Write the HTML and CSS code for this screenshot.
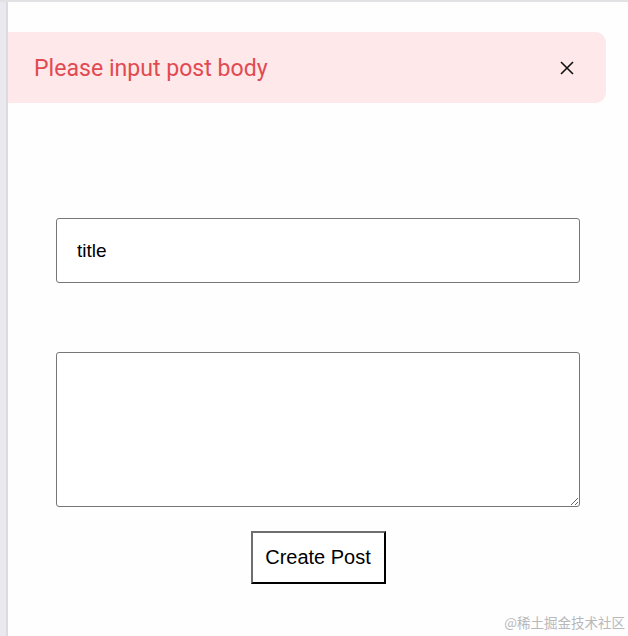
FILE: index.html
```html
<!DOCTYPE html>
<html>
<head>
<meta charset="utf-8">
<link rel="stylesheet" href="styles.css">
</head>
<body>
<div class="frame">
  <div class="sidebar"></div>
  <main class="main">
    <div class="alert">
      <span class="alert-text">Please input post body</span>
      <button class="alert-close" aria-label="close">
        <svg width="16" height="16" viewBox="0 0 16 16"><path d="M2 2 L14 14 M14 2 L2 14" stroke="#111" stroke-width="1.6" fill="none"/></svg>
      </button>
    </div>
    <form class="form">
      <input class="field" type="text" value="title">
      <textarea class="area"></textarea>
      <button type="button" class="submit">Create Post</button>
    </form>
  </main>
</div>
<div class="watermark">@稀土掘金技术社区</div>
</body>
</html>
```

FILE: styles.css
```css
html, body {
  margin: 0;
  padding: 0;
  background: #fff;
}
body {
  width: 628px;
  height: 636px;
  overflow: hidden;
  position: relative;
  border-top: 2px solid #e2e2e4;
  box-sizing: border-box;
}
.frame {
  display: flex;
  height: 100%;
}
.sidebar {
  width: 6px;
  background: #e9e9ef;
  border-right: 2px solid #dcdce0;
  flex: none;
}
.main {
  flex: 1;
  background: #fdfefd;
}
.alert {
  margin-top: 30px;
  width: 598px;
  height: 71px;
  box-sizing: border-box;
  background: #fee8ea;
  border-radius: 0 11px 11px 0;
  display: flex;
  align-items: center;
  justify-content: space-between;
  padding: 1px 31px 0 26px;
}
.alert-text {
  font-family: Roboto, "Liberation Sans", sans-serif;
  font-size: 23.1px;
  color: #e24a51;
}
.alert-close {
  background: none;
  border: none;
  padding: 0;
  width: 16px;
  height: 16px;
  display: flex;
}
.form {
  display: flex;
  flex-direction: column;
  align-items: center;
  width: 524px;
  margin-left: 48px;
  margin-top: 115px;
}
.field {
  width: 524px;
  height: 65px;
  box-sizing: border-box;
  border: 1px solid #767676;
  border-radius: 3px;
  padding: 0 20px;
  font-family: "Liberation Sans", Arial, sans-serif;
  font-size: 19px;
  color: #000;
  outline: none;
}
.area {
  margin-top: 69px;
  width: 524px;
  height: 155px;
  box-sizing: border-box;
  border: 1px solid #767676;
  border-radius: 3px;
  resize: vertical;
  font-family: "Liberation Sans", Arial, sans-serif;
  outline: none;
}
.submit {
  margin-top: 24px;
  width: 135px;
  height: 53px;
  box-sizing: border-box;
  background: #fff;
  border-width: 2px;
  border-style: solid;
  border-color: #6e6e6e #000 #000 #6e6e6e;
  font-family: "Liberation Sans", Arial, sans-serif;
  font-size: 20px;
  color: #000;
  padding: 0;
}
.watermark {
  position: absolute;
  right: 3px;
  bottom: 4px;
  font-family: "Noto Sans CJK SC", sans-serif;
  font-size: 13.5px;
  color: #b8b8bc;
}
```
